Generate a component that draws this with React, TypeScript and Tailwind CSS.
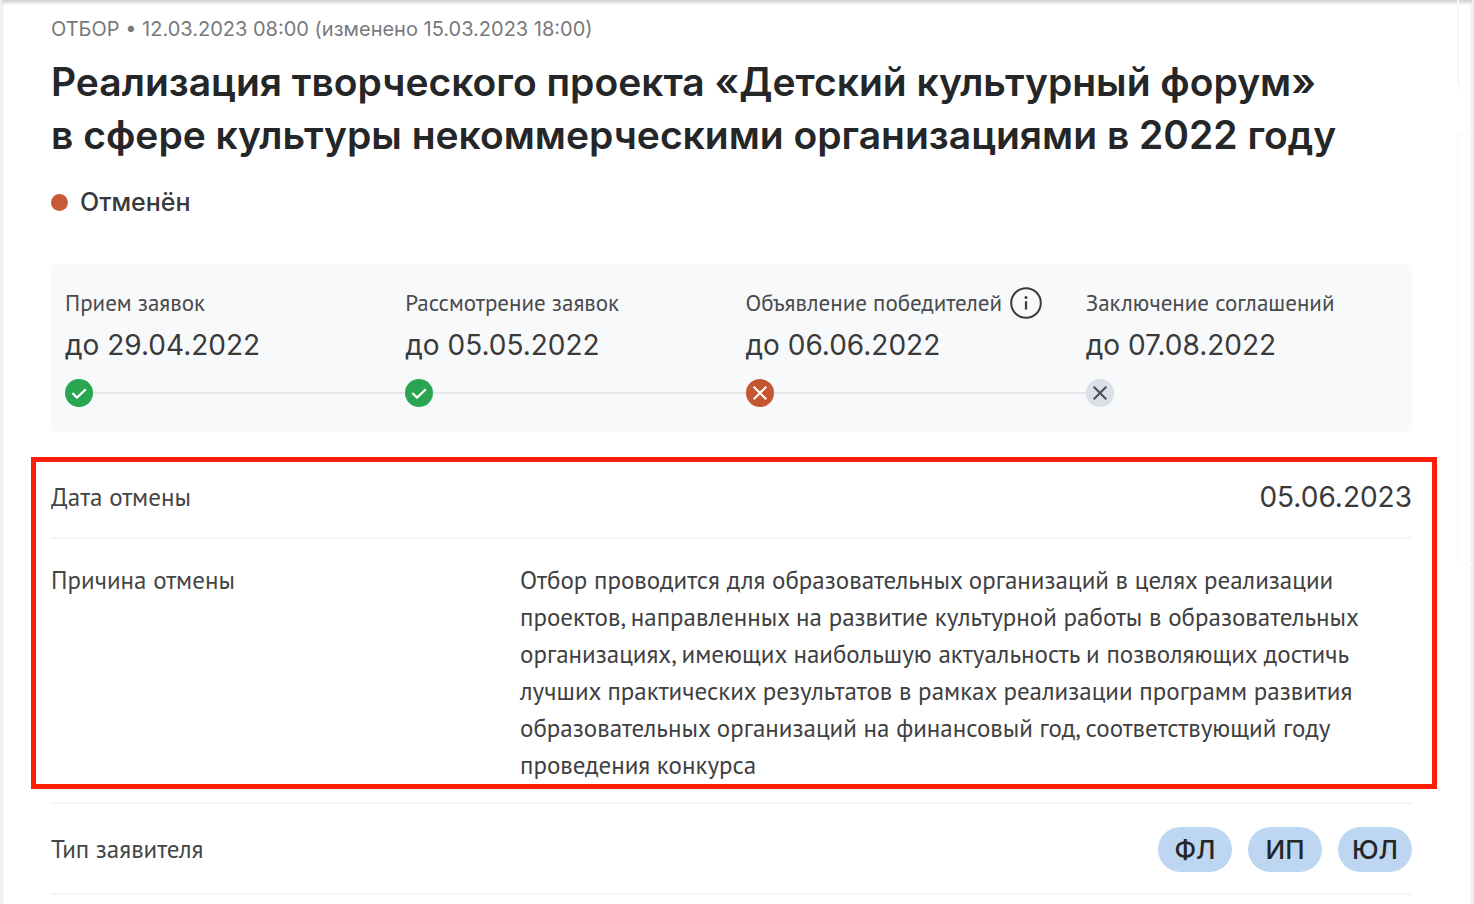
import type { ReactNode } from "react";

type StageState = "done" | "failed" | "skipped";

interface Stage {
  title: string;
  date: string;
  state: StageState;
  hint?: boolean;
}

const stages: Stage[] = [
  { title: "Прием заявок", date: "до 29.04.2022", state: "done" },
  { title: "Рассмотрение заявок", date: "до 05.05.2022", state: "done" },
  { title: "Объявление победителей", date: "до 06.06.2022", state: "failed", hint: true },
  { title: "Заключение соглашений", date: "до 07.08.2022", state: "skipped" },
];

const reason = [
  "Отбор проводится для образовательных организаций в целях реализации",
  "проектов, направленных на развитие культурной работы в образовательных",
  "организациях, имеющих наибольшую актуальность и позволяющих достичь",
  "лучших практических результатов в рамках реализации программ развития",
  "образовательных организаций на финансовый год, соответствующий году",
  "проведения конкурса",
];

const applicantTypes = ["ФЛ", "ИП", "ЮЛ"];

function StageIcon({ state }: { state: StageState }) {
  if (state === "done") {
    return (
      <svg viewBox="0 0 28 28" className="size-7 shrink-0" fill="none" aria-hidden="true">
        <circle cx="14" cy="14" r="14" fill="#2aa552" />
        <path d="M7.4 14l4.6 4.6 8.8-8.4" stroke="#fff" strokeWidth="2.2" strokeLinejoin="round" />
      </svg>
    );
  }
  const failed = state === "failed";
  return (
    <svg viewBox="0 0 28 28" className="size-7 shrink-0" fill="none" aria-hidden="true">
      <circle cx="14" cy="14" r="14" fill={failed ? "#c65631" : "#dbdfe7"} />
      <path d="M7.7 7.7l12.6 12.6M20.3 7.7L7.7 20.3" stroke={failed ? "#fff" : "#4b4d52"} strokeWidth="2" />
    </svg>
  );
}

function InfoButton() {
  return (
    <button type="button" aria-label="Подробнее" className="shrink-0">
      <svg viewBox="0 0 32 32" className="size-8" fill="none" aria-hidden="true">
        <circle cx="16" cy="16" r="14.8" stroke="#3a3a3a" strokeWidth="2" />
        <path d="M16 14.2v8.4" stroke="#3a3a3a" strokeWidth="2.2" />
        <circle cx="16" cy="10.6" r="1.5" fill="#3a3a3a" />
      </svg>
    </button>
  );
}

function StageColumn({ stage, last }: { stage: Stage; last: boolean }) {
  return (
    <li>
      <div className="flex h-8 items-center gap-2 whitespace-nowrap text-[23px] text-[#4a4b4d] font-['PT_Sans','Noto_Sans',sans-serif]">
        <span>{stage.title}</span>
        {stage.hint && <InfoButton />}
      </div>
      <p className="mt-2 text-[28px] leading-9 text-[#3a3a3b]">{stage.date}</p>
      <div className="mt-4 flex items-center">
        <StageIcon state={stage.state} />
        {!last && <div className="h-0.5 flex-1 bg-[#e3e6e9]" />}
      </div>
    </li>
  );
}

function Row({ label, children, className }: { label: string; children: ReactNode; className: string }) {
  return (
    <div className={`flex ${className}`}>
      <dt className="w-[469px] shrink-0 text-[#444546] font-['PT_Sans','Noto_Sans',sans-serif]">{label}</dt>
      <dd className="flex-1">{children}</dd>
    </div>
  );
}

export default function App() {
  return (
    <div className="flex min-h-screen border-x-2 border-[#eff1f6] bg-white font-['Inter',sans-serif] text-[#252627] shadow-[inset_0_3px_3px_#d4d4d4]">
      <main className="min-w-0 flex-1 pl-[49px] pr-[45px] pt-[15px]">
        <p className="text-[20px] leading-7 text-[#77797d]">
          ОТБОР • 12.03.2023 08:00 (изменено 15.03.2023 18:00)
        </p>
        <h1 className="mt-3 text-[39px] font-semibold leading-[53px]">
          Реализация творческого проекта «Детский культурный форум»
          <br />в сфере культуры некоммерческими организациями в 2022 году
        </h1>
        <p className="mt-[23px] flex items-center gap-3 text-[25px] font-medium leading-9 text-[#38393a]">
          <span className="size-[17px] rounded-full bg-[#c65a34]" />
          Отменён
        </p>

        <section className="mt-11 overflow-hidden rounded-md bg-[#f8f9fb] pb-[25px] pt-[23px]">
          <ol className="-mr-[14px] ml-[14px] grid grid-cols-4">
            {stages.map((stage, i) => (
              <StageColumn key={stage.title} stage={stage} last={i === stages.length - 1} />
            ))}
          </ol>
        </section>

        <dl className="mt-[25px] text-[25px] leading-[37px]">
          <div className="-ml-5 -mr-[25px] border-[5px] border-[#ff1d05] pl-[15px] pr-5">
            <Row label="Дата отмены" className="items-center border-b-2 border-[#f3f5f6] pb-[21px] pt-[17px]">
              <span className="block text-right text-[28px] text-[#3a3a3b]">05.06.2023</span>
            </Row>
            <Row label="Причина отмены" className="pt-[23px]">
              <p className="whitespace-nowrap text-[#3f4041] font-['PT_Sans','Noto_Sans',sans-serif]">
                {reason.map((line) => (
                  <span key={line} className="block">
                    {line}
                  </span>
                ))}
              </p>
            </Row>
          </div>
          <Row
            label="Тип заявителя"
            className="mt-[13px] items-center border-y-2 border-[#f3f5f6] pb-[21px] pt-[23px]"
          >
            <ul className="flex justify-end gap-4">
              {applicantTypes.map((type) => (
                <li
                  key={type}
                  className="flex h-[45px] w-[74px] items-center justify-center rounded-full bg-[#bdd6f2] text-[26px] font-medium"
                >
                  {type}
                </li>
              ))}
            </ul>
          </Row>
        </dl>
      </main>

      <aside className="flex w-[15px] shrink-0 flex-col gap-11" aria-hidden="true">
        <div className="h-[89px] rounded-bl-md border-b-2 border-l-2 border-[#f6f7f9]" />
        <div className="h-[432px] rounded-l-md border-2 border-r-0 border-[#fafafb]" />
      </aside>
    </div>
  );
}
